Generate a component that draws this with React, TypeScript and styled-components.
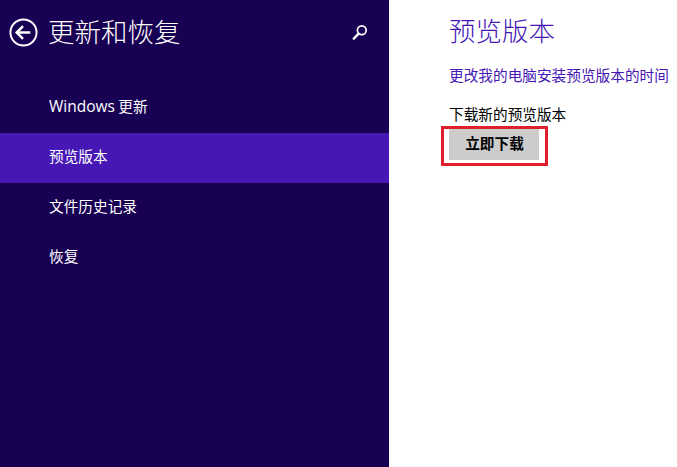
import styled, { createGlobalStyle } from 'styled-components';

const FONT = `"Noto Sans CJK SC", "Open Sans", sans-serif`;
const LATIN_FONT = `"Open Sans", "Noto Sans CJK SC", sans-serif`;

const App = () => (
  <>
    <GlobalStyle />
    <Page>
      <Sidebar>
        <Header>
          <BackIcon />
          <Heading>更新和恢复</Heading>
          <SearchIcon />
        </Header>
        <nav>
          <NavItem><Latin>Windows</Latin> 更新</NavItem>
          <NavItem $active>预览版本</NavItem>
          <NavItem>文件历史记录</NavItem>
          <NavItem>恢复</NavItem>
        </nav>
      </Sidebar>
      <Content>
        <Title>预览版本</Title>
        <SettingLink>更改我的电脑安装预览版本的时间</SettingLink>
        <Label>下载新的预览版本</Label>
        <ButtonWrap>
          <DownloadButton>立即下载</DownloadButton>
          <Callout />
        </ButtonWrap>
      </Content>
    </Page>
  </>
);

export default App;

const BackIcon = () => (
  <BackSvg width="29" height="29" viewBox="0 0 30 30" fill="none" stroke="#fff">
    <circle cx="15" cy="15" r="13.5" strokeWidth="2" />
    <path d="M8 15h14" strokeWidth="2.6" />
    <path d="M14.5 8.5L8 15l6.5 6.5" strokeWidth="2.6" />
  </BackSvg>
);

const SearchIcon = () => (
  <SearchSvg width="16" height="16" viewBox="0 0 16 16" fill="none" stroke="#fff">
    <circle cx="9.8" cy="6.2" r="4.4" strokeWidth="1.7" />
    <path d="M6.6 9.6L1.8 14.6" strokeWidth="2.4" strokeLinecap="round" />
  </SearchSvg>
);

const GlobalStyle = createGlobalStyle`
  html, body {
    margin: 0;
    padding: 0;
    background: #fff;
  }
`;

const Page = styled.div`
  display: flex;
  width: 677px;
  height: 467px;
  overflow: hidden;
  font-family: ${FONT};
`;

const Sidebar = styled.aside`
  flex: 0 0 389px;
  background: #180052;
  color: #fff;
`;

const Header = styled.header`
  display: flex;
  align-items: center;
  height: 83px;
  padding: 0 21px 19px 9px;
  box-sizing: border-box;
`;

const BackSvg = styled.svg`
  flex: none;
`;

const Heading = styled.h1`
  margin: 0 0 2px 10px;
  font-size: 26.5px;
  font-weight: 300;
  line-height: 40px;
`;

const SearchSvg = styled.svg`
  margin-left: auto;
`;

const NavItem = styled.div<{ $active?: boolean }>`
  height: 50px;
  padding-left: 49px;
  font-size: 14.67px;
  line-height: 45px;
  background: ${(p) => (p.$active ? '#4617b4' : 'transparent')};
`;

const Latin = styled.span`
  font-family: ${LATIN_FONT};
  font-size: 15.5px;
`;

const Content = styled.main`
  flex: 1;
  padding: 10px 0 0 60px;
  color: #000;
`;

const Title = styled.h2`
  margin: 0;
  color: #4617b4;
  font-size: 26.5px;
  font-weight: 300;
  line-height: 40px;
`;

const SettingLink = styled.div`
  margin-top: 14px;
  color: #4617b4;
  font-size: 14.67px;
  line-height: 22px;
  white-space: nowrap;
`;

const Label = styled.div`
  margin-top: 17px;
  font-size: 14.67px;
  line-height: 22px;
  white-space: nowrap;
`;

const ButtonWrap = styled.div`
  position: relative;
  width: 90px;
  margin-top: 3px;
`;

const DownloadButton = styled.button`
  display: block;
  width: 90px;
  height: 32px;
  padding: 0 0 3px 1px;
  border: 0;
  background: #cccccc;
  color: #000;
  font-family: ${FONT};
  font-size: 14.67px;
  font-weight: 700;
`;

const Callout = styled.div`
  position: absolute;
  top: -2px;
  left: -8px;
  width: 107px;
  height: 40px;
  box-sizing: border-box;
  border: 3px solid #e01f2d;
`;
